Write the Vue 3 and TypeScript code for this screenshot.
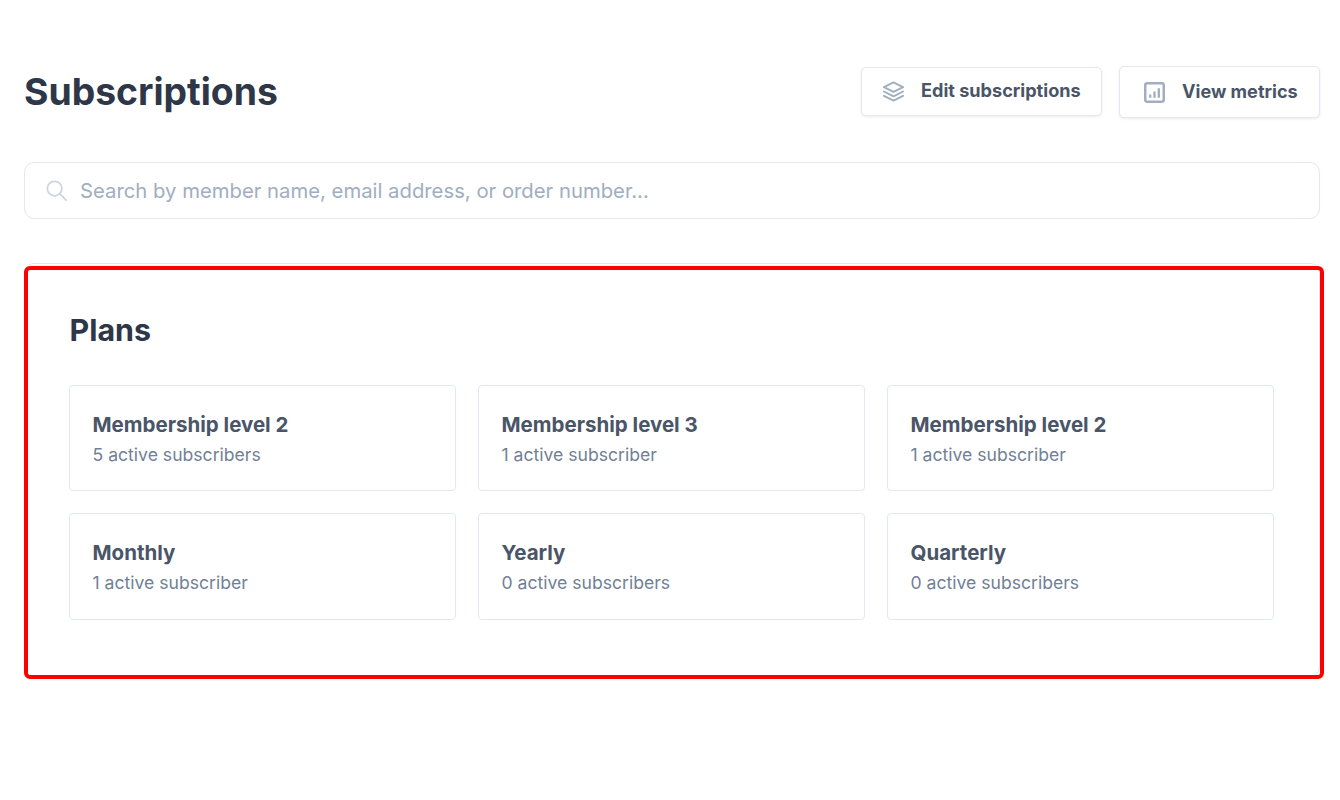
<script setup lang="ts">
interface Plan { name: string; subs: string }
const plans: Plan[] = [
  { name: 'Membership level 2', subs: '5 active subscribers' },
  { name: 'Membership level 3', subs: '1 active subscriber' },
  { name: 'Membership level 2', subs: '1 active subscriber' },
  { name: 'Monthly', subs: '1 active subscriber' },
  { name: 'Yearly', subs: '0 active subscribers' },
  { name: 'Quarterly', subs: '0 active subscribers' },
]
</script>

<template>
  <div class="page">
    <header class="head">
      <h1 class="title">Subscriptions</h1>
      <div class="actions">
        <button class="btn btn-edit" type="button">
          <svg class="ico" viewBox="0 0 22 22" fill="none" stroke="#a0aec0" stroke-width="2" stroke-linejoin="round" stroke-linecap="round">
            <path d="M11 1.5 21 6.5 11 11.5 1 6.5Z" />
            <path d="M1 11 11 16 21 11" />
            <path d="M1 15.5 11 20.5 21 15.5" />
          </svg>
          <span>Edit subscriptions</span>
        </button>
        <button class="btn btn-metrics" type="button">
          <svg class="ico" viewBox="0 0 22 22" fill="none" stroke="#a0aec0">
            <rect x="1.3" y="1.3" width="19.4" height="19.4" rx="2" stroke-width="2.6" />
            <path d="M6.5 16.5v-3.5M11 16.5v-6.5M15.5 16.5V6.5" stroke-width="2.4" />
          </svg>
          <span>View metrics</span>
        </button>
      </div>
    </header>

    <div class="search">
      <svg class="search-ico" viewBox="0 0 22 22" fill="none" stroke="#cbd5e0" stroke-width="1.8" stroke-linecap="round">
        <circle cx="9" cy="9" r="7.6" />
        <path d="M14.6 14.6 21 21" />
      </svg>
      <input class="search-input" type="text" placeholder="Search by member name, email address, or order number..." />
    </div>

    <section class="panel">
      <h2 class="panel-title">Plans</h2>
      <div class="grid">
        <article v-for="(plan, i) in plans" :key="i" class="plan">
          <div class="plan-name">{{ plan.name }}</div>
          <div class="plan-subs">{{ plan.subs }}</div>
        </article>
      </div>
      <div class="highlight"></div>
    </section>
  </div>
</template>

<style>
html, body { background: #fff; }
</style>

<style scoped>
.page {
  box-sizing: border-box;
  width: 1340px;
  height: 800px;
  padding: 66px 20px 0 24px;
  font-family: Inter, "Open Sans", sans-serif;
  background: #fff;
  overflow: hidden;
}
.head {
  display: flex;
  align-items: center;
  justify-content: space-between;
  height: 52px;
}
.title {
  margin: 0;
  margin-top: -1px;
  font-size: 37.3px;
  line-height: 50px;
  font-weight: 700;
  color: #2d3748;
}
.actions {
  display: flex;
  align-items: flex-start;
  gap: 17px;
}
.btn {
  display: flex;
  align-items: center;
  box-sizing: border-box;
  background: #fff;
  border: 1px solid #e2e8f0;
  border-radius: 5px;
  box-shadow: 0 1px 3px rgba(0, 0, 0, 0.08);
  font-family: inherit;
  font-size: 18.1px;
  line-height: 22px;
  font-weight: 700;
  color: #4a5568;
  padding: 0 0 3px;
}
.btn-edit { width: 241px; height: 49px; margin-top: 1px; padding-left: 21px; gap: 17px; }
.btn-metrics { width: 201px; height: 52px; padding-left: 24px; gap: 17px; }
.ico { width: 21px; height: 21px; flex: none; margin-top: 3px; }
.search {
  display: flex;
  align-items: center;
  box-sizing: border-box;
  height: 57px;
  margin-top: 44px;
  padding-left: 21px;
  border: 1px solid #e2e8f0;
  border-radius: 10px;
}
.search-ico { width: 21px; height: 21px; flex: none; }
.search-input {
  flex: 1;
  margin-left: 13px;
  border: 0;
  outline: 0;
  padding: 0;
  background: transparent;
  font-family: inherit;
  font-size: 20.3px;
  color: #4a5568;
}
.search-input::placeholder { color: #a0aec0; opacity: 1; }
.panel {
  position: relative;
  box-sizing: border-box;
  height: 414px;
  margin-top: 44px;
  padding: 44px 44px 0;
  border: 1px solid #e2e8f0;
  border-radius: 10px;
}
.panel-title {
  margin: 0;
  padding-left: 0.5px;
  font-size: 30.4px;
  line-height: 44px;
  font-weight: 700;
  color: #2d3748;
}
.grid {
  display: grid;
  grid-template-columns: repeat(3, 387px);
  grid-auto-rows: 106.4px;
  column-gap: 22px;
  row-gap: 22px;
  margin-top: 33px;
}
.plan {
  box-sizing: border-box;
  padding: 25px 22.5px 0;
  border: 1px solid #e2e8f0;
  border-radius: 4px;
}
.plan-name {
  font-size: 20.5px;
  line-height: 28px;
  font-weight: 700;
  color: #4a5568;
}
.plan-subs {
  margin-top: 3px;
  font-size: 17.6px;
  line-height: 26px;
  color: #718096;
}
.highlight {
  position: absolute;
  left: -1px;
  top: 2px;
  width: 1300px;
  height: 413px;
  box-sizing: border-box;
  border: 4px solid #ff0000;
  border-radius: 6px;
  pointer-events: none;
}
</style>
